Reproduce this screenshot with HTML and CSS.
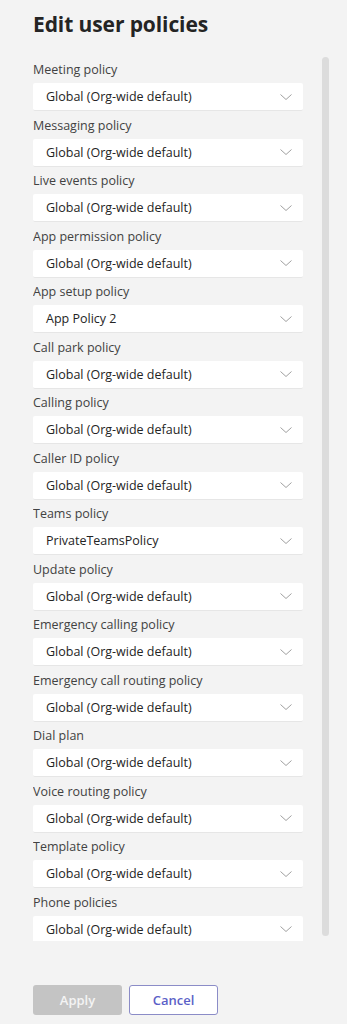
FILE: index.html
```html
<!DOCTYPE html>
<html>
<head>
<meta charset="utf-8">
<link rel="stylesheet" href="styles.css">
</head>
<body>
<div class="panel">
  <h1 class="title">Edit user policies</h1>
  <div class="scroll">
    <div class="list">
      <div class="field"><div class="label">Meeting policy</div><div class="select"><span>Global (Org-wide default)</span><svg class="chev" viewBox="0 0 12 6"><path d="M0.5 0.5 L6 5.5 L11.5 0.5"/></svg></div></div>
      <div class="field"><div class="label">Messaging policy</div><div class="select"><span>Global (Org-wide default)</span><svg class="chev" viewBox="0 0 12 6"><path d="M0.5 0.5 L6 5.5 L11.5 0.5"/></svg></div></div>
      <div class="field"><div class="label">Live events policy</div><div class="select"><span>Global (Org-wide default)</span><svg class="chev" viewBox="0 0 12 6"><path d="M0.5 0.5 L6 5.5 L11.5 0.5"/></svg></div></div>
      <div class="field"><div class="label">App permission policy</div><div class="select"><span>Global (Org-wide default)</span><svg class="chev" viewBox="0 0 12 6"><path d="M0.5 0.5 L6 5.5 L11.5 0.5"/></svg></div></div>
      <div class="field"><div class="label">App setup policy</div><div class="select"><span>App Policy 2</span><svg class="chev" viewBox="0 0 12 6"><path d="M0.5 0.5 L6 5.5 L11.5 0.5"/></svg></div></div>
      <div class="field"><div class="label">Call park policy</div><div class="select"><span>Global (Org-wide default)</span><svg class="chev" viewBox="0 0 12 6"><path d="M0.5 0.5 L6 5.5 L11.5 0.5"/></svg></div></div>
      <div class="field"><div class="label">Calling policy</div><div class="select"><span>Global (Org-wide default)</span><svg class="chev" viewBox="0 0 12 6"><path d="M0.5 0.5 L6 5.5 L11.5 0.5"/></svg></div></div>
      <div class="field"><div class="label">Caller ID policy</div><div class="select"><span>Global (Org-wide default)</span><svg class="chev" viewBox="0 0 12 6"><path d="M0.5 0.5 L6 5.5 L11.5 0.5"/></svg></div></div>
      <div class="field"><div class="label">Teams policy</div><div class="select"><span>PrivateTeamsPolicy</span><svg class="chev" viewBox="0 0 12 6"><path d="M0.5 0.5 L6 5.5 L11.5 0.5"/></svg></div></div>
      <div class="field"><div class="label">Update policy</div><div class="select"><span>Global (Org-wide default)</span><svg class="chev" viewBox="0 0 12 6"><path d="M0.5 0.5 L6 5.5 L11.5 0.5"/></svg></div></div>
      <div class="field"><div class="label">Emergency calling policy</div><div class="select"><span>Global (Org-wide default)</span><svg class="chev" viewBox="0 0 12 6"><path d="M0.5 0.5 L6 5.5 L11.5 0.5"/></svg></div></div>
      <div class="field"><div class="label">Emergency call routing policy</div><div class="select"><span>Global (Org-wide default)</span><svg class="chev" viewBox="0 0 12 6"><path d="M0.5 0.5 L6 5.5 L11.5 0.5"/></svg></div></div>
      <div class="field"><div class="label">Dial plan</div><div class="select"><span>Global (Org-wide default)</span><svg class="chev" viewBox="0 0 12 6"><path d="M0.5 0.5 L6 5.5 L11.5 0.5"/></svg></div></div>
      <div class="field"><div class="label">Voice routing policy</div><div class="select"><span>Global (Org-wide default)</span><svg class="chev" viewBox="0 0 12 6"><path d="M0.5 0.5 L6 5.5 L11.5 0.5"/></svg></div></div>
      <div class="field"><div class="label">Template policy</div><div class="select"><span>Global (Org-wide default)</span><svg class="chev" viewBox="0 0 12 6"><path d="M0.5 0.5 L6 5.5 L11.5 0.5"/></svg></div></div>
      <div class="field"><div class="label">Phone policies</div><div class="select"><span>Global (Org-wide default)</span><svg class="chev" viewBox="0 0 12 6"><path d="M0.5 0.5 L6 5.5 L11.5 0.5"/></svg></div></div>
    </div>
    <div class="scrollbar"></div>
  </div>
  <div class="actions">
    <button class="btn btn-apply">Apply</button>
    <button class="btn btn-cancel">Cancel</button>
  </div>
</div>
</body>
</html>
```

FILE: styles.css
```css
html, body {
  margin: 0;
  padding: 0;
  background: #f3f3f3;
}
body {
  font-family: "Open Sans", "Noto Sans", "DejaVu Sans", sans-serif;
  color: #242424;
  width: 347px;
  height: 1024px;
  overflow: hidden;
}
.panel {
  padding-left: 33px;
}
.title {
  margin: 0;
  padding-top: 9px;
  height: 57px;
  box-sizing: border-box;
  font-size: 21px;
  line-height: 30px;
  font-weight: 700;
  color: #242424;
  letter-spacing: -0.1px;
}
.scroll {
  display: flex;
  height: 884px;
  gap: 19px;
}
.list {
  width: 270px;
  overflow: hidden;
  padding-top: 3px;
}
.field {
  height: 55.5px;
}
.label {
  font-size: 12.5px;
  line-height: 20px;
  height: 20px;
  margin-bottom: 3px;
  color: #424242;
}
.select {
  height: 28px;
  box-sizing: border-box;
  background: #fff;
  border-bottom: 1px solid #e6e6e6;
  border-radius: 2px;
  display: flex;
  align-items: center;
  justify-content: space-between;
  padding: 0 11px 0 13px;
  font-size: 12.5px;
  color: #242424;
}
.chev {
  width: 12px;
  height: 6px;
  fill: none;
  stroke: #a0a0a0;
  stroke-width: 1;
}
.scrollbar {
  width: 7px;
  height: 879px;
  background: #dcdcdc;
  border-radius: 4px;
}
.actions {
  display: flex;
  gap: 7px;
  margin-top: 44px;
}
.btn {
  width: 89px;
  height: 30px;
  border-radius: 3px;
  font-family: "Open Sans", "Noto Sans", sans-serif;
  font-size: 13px;
  font-weight: 600;
  padding: 0;
}
.btn-apply {
  background: #c4c4c4;
  color: #f4f4f4;
  border: none;
}
.btn-cancel {
  background: #fff;
  color: #5b5fc7;
  border: 1px solid #8b8cc7;
}
```
